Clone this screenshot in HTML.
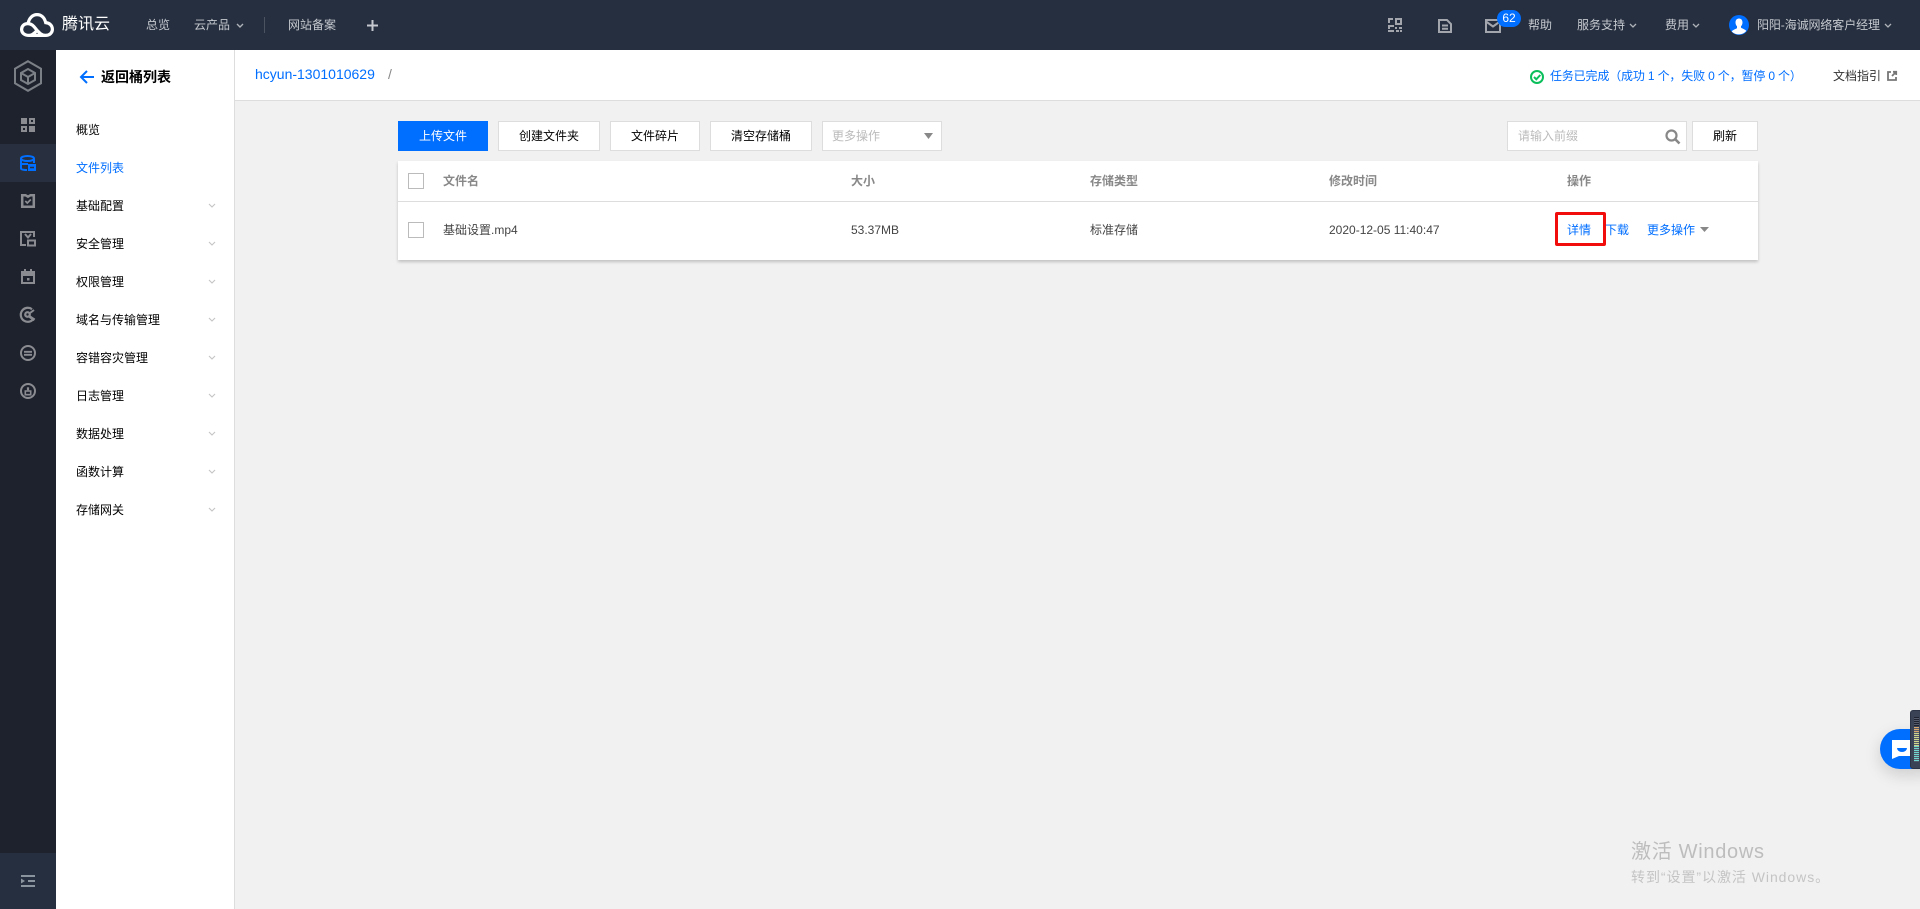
<!DOCTYPE html>
<html lang="zh"><head><meta charset="utf-8"><title>文件列表</title>
<style>
*{box-sizing:border-box;margin:0;padding:0}
html,body{width:1920px;height:909px;overflow:hidden;background:#f1f1f1;font:12px/20px "Liberation Sans","Noto Sans CJK SC",sans-serif;color:#000}
.a{position:absolute;white-space:nowrap}
.bx{position:absolute}
svg{position:absolute;display:block;overflow:visible}
.top{color:#c5c9cf}
.btn{position:absolute;top:121px;height:30px;line-height:28px;background:#fff;border:1px solid #ddd;text-align:center}
.th{color:#888;font-weight:bold}
.td{color:#444}
.blue{color:#006eff}
</style></head><body>
<div class="bx" style="left:0;top:0;width:1920px;height:50px;background:#262f3f"></div>
<div class="bx" style="left:0;top:50px;width:56px;height:859px;background:#1e222d"></div>
<div class="bx" style="left:0;top:144px;width:56px;height:38px;background:#28303f"></div>
<div class="bx" style="left:0;top:853px;width:56px;height:56px;background:#262f3f"></div>
<div class="bx" style="left:56px;top:50px;width:179px;height:859px;background:#fff;border-right:1px solid #ddd"></div>
<div class="bx" style="left:235px;top:50px;width:1685px;height:51px;background:#fff;border-bottom:1px solid #ddd"></div>

<!-- logo -->
<svg style="left:20px;top:13px" width="34" height="24" viewBox="0 0 34 24" fill="none" stroke="#fff" stroke-width="3.200" stroke-linecap="round"><path d="M9 22.400C4.500 22.400 1.600 20 1.600 16.500S4.200 10.500 8 10.600C9 5.200 12.500 1.600 17 1.600S24.500 4.700 25.700 9.600C29.800 9.800 32.400 12.800 32.400 16.300S29.600 22.400 25.500 22.400C21.500 22.400 19 19.500 17 17.300 14.800 14.800 12.500 10.600 8 10.600M9 22.400H25.500M9 22.400C12 22.400 14 20.500 15.500 19"/></svg>
<div class="a" style="left:62px;top:13px;font-size:16px;line-height:24px;color:#fff">腾讯云</div>
<div class="a top" style="left:146px;top:15px">总览</div>
<div class="a top" style="left:194px;top:15px">云产品</div>
<svg style="left:236px;top:23px" width="8" height="6" fill="none" stroke="#aeb3ba" stroke-width="1.400"><path d="M1 1l3 3 3-3"/></svg>
<div class="bx" style="left:264px;top:17px;width:1px;height:16px;background:#4b5361"></div>
<div class="a top" style="left:288px;top:15px">网站备案</div>
<svg style="left:367px;top:20px" width="11" height="11" fill="#c5c9cf"><path d="M4.500 0h2v4.500H11v2H6.500V11h-2V6.500H0v-2h4.500z"/></svg>

<!-- top right -->
<svg style="left:1388px;top:18px" width="14" height="14" fill="#a3a7ad"><path d="M0 0h5v2H2v3H0zM7 0h7v7H7zM9 2v3h3V2zM0 7h6v2H2v2H0zM7 9h2v2H7zM11 9h3v2h-3zM0 12h6v2H0zM8 12h3v2H8zM12 12h2v2h-2z" fill-rule="evenodd"/></svg>
<svg style="left:1438px;top:19px" width="14" height="14" fill="none" stroke="#a3a7ad" stroke-width="2"><path d="M1 1h8l4 4v8H1zM4 6.500h6M4 9.800h6" /></svg>
<svg style="left:1485px;top:19px" width="16" height="14" fill="none" stroke="#a3a7ad" stroke-width="2"><path d="M1 1h14v12H1zM1 2.500l7 5 7-5"/></svg>
<div class="a" style="left:1497px;top:10px;width:24px;height:17px;border-radius:9px;background:#006eff;color:#fff;font-size:12px;line-height:17px;text-align:center">62</div>
<div class="a top" style="left:1528px;top:15px">帮助</div>
<div class="a top" style="left:1577px;top:15px">服务支持</div>
<svg style="left:1629px;top:23px" width="8" height="6" fill="none" stroke="#aeb3ba" stroke-width="1.300"><path d="M1 1l3 3 3-3"/></svg>
<div class="a top" style="left:1665px;top:15px">费用</div>
<svg style="left:1692px;top:23px" width="8" height="6" fill="none" stroke="#aeb3ba" stroke-width="1.300"><path d="M1 1l3 3 3-3"/></svg>
<svg style="left:1729px;top:15px" width="20" height="20" viewBox="0 0 20 20"><circle cx="10" cy="10" r="10" fill="#006eff"/><path d="M10 3.500c2.300 0 3.500 1.800 3.500 4 0 1.600-.7 3-1.500 3.800v1.200c0 .8 4 1.500 5.300 3.500A10 10 0 0 1 2.700 16.500c1.300-2 5.300-2.700 5.300-3.500v-1.700C7.200 10.500 6.500 9.100 6.500 7.500c0-2.200 1.200-4 3.500-4z" fill="#fff"/></svg>
<div class="a top" style="left:1757px;top:15px;letter-spacing:-.1px">阳阳-海诚网络客户经理</div>
<svg style="left:1884px;top:23px" width="8" height="6" fill="none" stroke="#aeb3ba" stroke-width="1.300"><path d="M1 1l3 3 3-3"/></svg>

<!-- rail -->
<svg style="left:14px;top:60px" width="28" height="32" viewBox="0 0 28 32" fill="none" stroke="#7b7f86" stroke-width="2"><path d="M14 1.200l13 7.500v14.600L14 30.800 1 23.300V8.700z"/><path d="M14 9l7 4v7l-7 4-7-4v-7zM7 13l7 4 7-4M14 17v7"/></svg>
<svg style="left:21px;top:118px" width="14" height="14" fill="#8a8c91"><path d="M0 0h6v6H0zM8 8h6v6H8z"/><path d="M0 8h6v6H0zM2 10v2h2v-2zM8 0h6v6H8zM10 2v2h2V2z" fill-rule="evenodd"/></svg>
<svg style="left:20px;top:155px" width="16" height="16" fill="none" stroke="#006eff" stroke-width="2"><ellipse cx="7.500" cy="3.500" rx="6.500" ry="2.500"/><path d="M1 3.500V13.500C1 14.500 2.500 15 7 15M14 3.500V8M1 9h7"/><path d="M8 9h8v7H8z" fill="#006eff" stroke="none"/><path d="M10 12.500h4" stroke="#28303f" stroke-width="1.500"/></svg>
<svg style="left:21px;top:194px" width="14" height="14" fill="none" stroke="#8a8c91" stroke-width="2.500"><path d="M1.200 1.200h3.300l2.500 1.500 2.500-1.500h3.300v11.600H1.200z"/><path d="M4.300 7l2 2 3.500-3.500" stroke-width="1.700"/></svg>
<svg style="left:20px;top:231px" width="16" height="16" fill="none" stroke="#8a8c91" stroke-width="2"><path d="M6 14H1V1h13v5M5 3l3 3.500L11 3"/><path d="M8 9.500h7v5H8z"/></svg>
<svg style="left:21px;top:269px" width="14" height="15" fill="#8a8c91"><path d="M3 0h2v2h4V0h2v2h3v13H0V2h3zM2 7v6h10V7zM6 9h2.500v2.500H6z" fill-rule="evenodd"/></svg>
<svg style="left:20px;top:307px" width="16" height="16" fill="none" stroke="#8a8c91" stroke-width="2.200"><path d="M12 2.200A7 7 0 1 0 14 11"/><circle cx="7.500" cy="7.500" r="2.300"/><path d="M9.500 9.500l5 3.500" stroke-width="2.800"/><path d="M10 6l4-3" stroke-width="2"/></svg>
<svg style="left:20px;top:345px" width="16" height="16" fill="none" stroke="#8a8c91" stroke-width="2"><circle cx="8" cy="8" r="7"/><path d="M4 6.800h8M4 9.800h8" stroke-width="1.800"/></svg>
<svg style="left:20px;top:383px" width="16" height="16" fill="none" stroke="#8a8c91" stroke-width="2"><circle cx="8" cy="8" r="7"/><path d="M8 4.300v3" stroke-width="2.200"/><path d="M5.300 8h5.400v3.700H5.300z" stroke-width="1.600"/></svg>
<svg style="left:21px;top:875px" width="14" height="12" fill="#8a949e"><path d="M0 0h14v2H0zM0 10h14v2H0zM7 5h7v2H7zM0 3.500L4 6 0 8.500z"/></svg>

<!-- sidebar -->
<svg style="left:80px;top:70px" width="14" height="14" fill="none" stroke="#006eff" stroke-width="2"><path d="M14 7H1.500M7 1L1 7l6 6"/></svg>
<div class="a" style="left:101px;top:67px;font-size:14px;font-weight:bold;line-height:20px">返回桶列表</div>
<div class="a" style="left:76px;top:120px">概览</div>
<div class="a blue" style="left:76px;top:158px">文件列表</div>
<div class="a" style="left:76px;top:196px">基础配置</div>
<div class="a" style="left:76px;top:234px">安全管理</div>
<div class="a" style="left:76px;top:272px">权限管理</div>
<div class="a" style="left:76px;top:310px">域名与传输管理</div>
<div class="a" style="left:76px;top:348px">容错容灾管理</div>
<div class="a" style="left:76px;top:386px">日志管理</div>
<div class="a" style="left:76px;top:424px">数据处理</div>
<div class="a" style="left:76px;top:462px">函数计算</div>
<div class="a" style="left:76px;top:500px">存储网关</div>
<svg style="left:208px;top:0" width="8" height="520" fill="none" stroke="#c4c4c4" stroke-width="1.100"><path d="M1 204l3 3 3-3M1 242l3 3 3-3M1 280l3 3 3-3M1 318l3 3 3-3M1 356l3 3 3-3M1 394l3 3 3-3M1 432l3 3 3-3M1 470l3 3 3-3M1 508l3 3 3-3"/></svg>

<!-- header -->
<div class="a blue" style="left:255px;top:64px;font-size:14px">hcyun-1301010629</div>
<div class="a" style="left:388px;top:64px;font-size:14px;color:#888">/</div>
<svg style="left:1530px;top:70px" width="14" height="14" fill="none" stroke="#0abf5b" stroke-width="2"><circle cx="7" cy="7" r="6"/><path d="M4 7l2.300 2.300L10.300 5"/></svg>
<div class="a blue" style="left:1550px;top:66px;letter-spacing:-.16px">任务已完成（成功 1 个，失败 0 个，暂停 0 个）</div>
<div class="a" style="left:1833px;top:66px;color:#333">文档指引</div>
<svg style="left:1887px;top:71px" width="10" height="10" fill="none" stroke="#777" stroke-width="1.800"><path d="M4 1H1v8h8V6M5 5l4-4M6 .8h3.200V4"/></svg>

<!-- toolbar -->
<div class="btn" style="left:398px;width:90px;background:#006eff;border-color:#006eff;color:#fff">上传文件</div>
<div class="btn" style="left:498px;width:102px">创建文件夹</div>
<div class="btn" style="left:610px;width:90px">文件碎片</div>
<div class="btn" style="left:710px;width:102px">清空存储桶</div>
<div class="btn" style="left:822px;width:120px;color:#bbb;text-align:left;padding-left:9px">更多操作</div>
<svg style="left:924px;top:133px" width="9" height="6" fill="#888"><path d="M0 0h9L4.500 6z"/></svg>
<div class="btn" style="left:1507px;width:180px;color:#bbb;text-align:left;padding-left:10px">请输入前缀</div>
<svg style="left:1665px;top:129px" width="15" height="15" fill="none" stroke="#888" stroke-width="2.200"><circle cx="6.500" cy="6.500" r="5"/><path d="M10.500 10.500l4 4" stroke-width="2.600"/></svg>
<div class="btn" style="left:1692px;width:66px">刷新</div>

<!-- table -->
<div class="bx" style="left:398px;top:161px;width:1360px;height:99px;background:#fff;box-shadow:0 2px 3px rgba(0,0,0,.2)"></div>
<div class="bx" style="left:398px;top:201px;width:1360px;height:1px;background:#ddd"></div>
<div class="bx" style="left:408px;top:173px;width:16px;height:16px;border:1px solid #bbb"></div>
<div class="bx" style="left:408px;top:222px;width:16px;height:16px;border:1px solid #bbb"></div>
<div class="a th" style="left:443px;top:171px">文件名</div>
<div class="a th" style="left:851px;top:171px">大小</div>
<div class="a th" style="left:1090px;top:171px">存储类型</div>
<div class="a th" style="left:1329px;top:171px">修改时间</div>
<div class="a th" style="left:1567px;top:171px">操作</div>
<div class="a td" style="left:443px;top:220px">基础设置.mp4</div>
<div class="a td" style="left:851px;top:220px">53.37MB</div>
<div class="a td" style="left:1090px;top:220px">标准存储</div>
<div class="a td" style="left:1329px;top:220px">2020-12-05 11:40:47</div>
<div class="a blue" style="left:1567px;top:220px">详情</div>
<div class="a blue" style="left:1605px;top:220px">下载</div>
<div class="a blue" style="left:1647px;top:220px">更多操作</div>
<svg style="left:1700px;top:227px" width="9" height="5" fill="#888"><path d="M0 0h9L4.500 5z"/></svg>
<div class="bx" style="left:1555px;top:212px;width:51px;height:34px;border:3px solid #f20d0d;border-radius:2px"></div>

<!-- chat -->
<div class="bx" style="left:1880px;top:729px;width:60px;height:40px;border-radius:20px;background:#006eff;box-shadow:0 6px 16px rgba(0,0,0,.15)"></div>
<svg style="left:1892px;top:740px" width="20" height="19"><path d="M0 0h20v16H7L0 19z" fill="#fff"/><path d="M5 8h10a5 4 0 0 1-10 0z" fill="#006eff"/></svg>
<div class="bx" style="left:1910px;top:710px;width:12px;height:59px;background:#3a4256;border:1px solid #2c3344;border-radius:3px 0 0 3px"></div>
<div class="bx" style="left:1914px;top:717px;width:5px;height:9px;background:repeating-linear-gradient(#1e2230 0 1px,#555b6b 1px 2px)"></div>
<div class="bx" style="left:1914px;top:727px;width:5px;height:6px;background:repeating-linear-gradient(#d9a66b 0 1px,#555b6b 1px 2px)"></div>
<div class="bx" style="left:1914px;top:733px;width:5px;height:13px;background:repeating-linear-gradient(#cfd68a 0 1px,#555b6b 1px 2px)"></div>
<div class="bx" style="left:1914px;top:746px;width:5px;height:16px;background:repeating-linear-gradient(#6fd6cf 0 1px,#555b6b 1px 2px)"></div>

<!-- watermark -->
<div class="a" style="left:1631px;top:838px;font-size:20px;line-height:28px;color:#bdbdbd;letter-spacing:.7px">激活 Windows</div>
<div class="a" style="left:1631px;top:867px;font-size:14px;line-height:20px;color:#c4c4c4;letter-spacing:.95px">转到“设置”以激活 Windows。</div>
</body></html>
